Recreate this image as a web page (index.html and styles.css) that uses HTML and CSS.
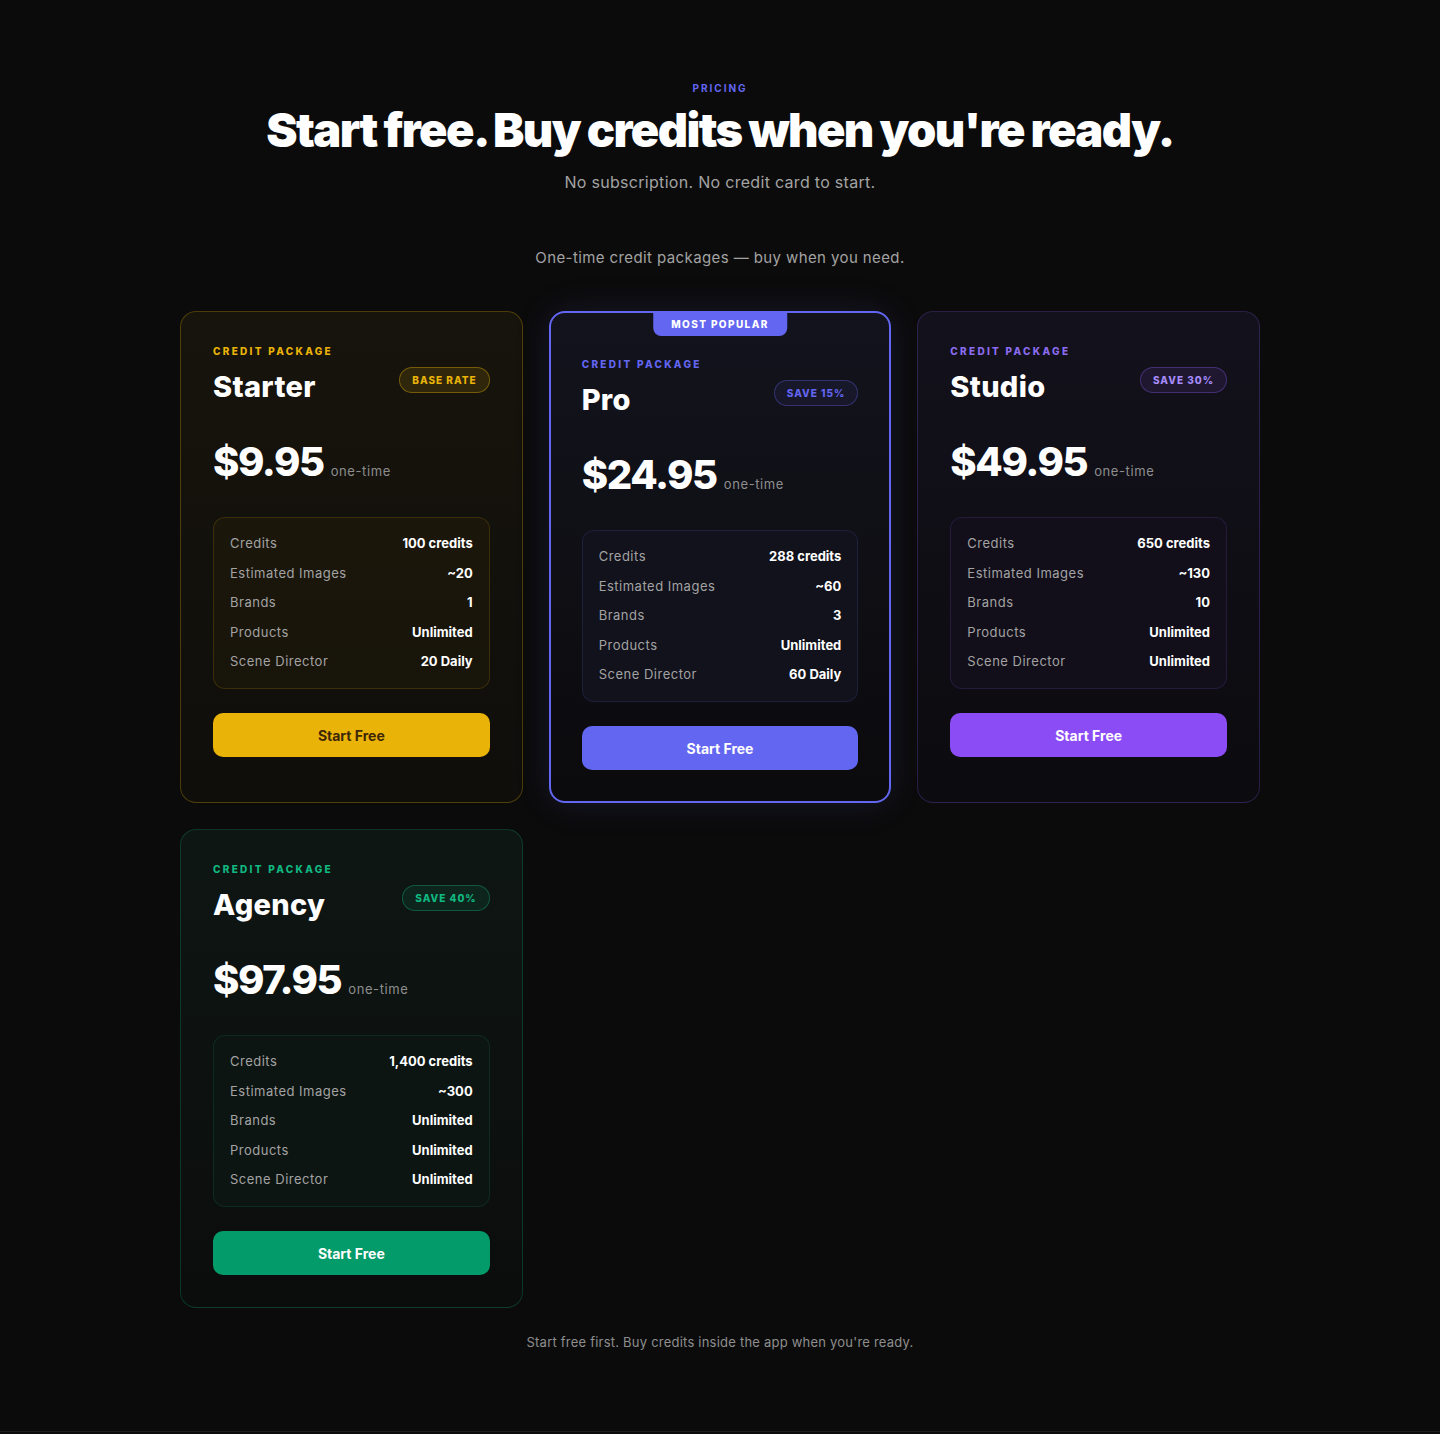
FILE: index.html
```html
<!DOCTYPE html>
<html lang="en">
<head>
<meta charset="utf-8">
<title>Pricing</title>
<link rel="stylesheet" href="styles.css">
</head>
<body>
<section class="pricing">
  <div class="eyebrow">PRICING</div>
  <h1 class="headline">Start free. Buy credits when you're ready.</h1>
  <p class="subtitle">No subscription. No credit card to start.</p>
  <p class="intro">One-time credit packages — buy when you need.</p>

  <div class="grid">
    <article class="card card-starter">
      <div class="label">CREDIT PACKAGE</div>
      <div class="name-row">
        <h2 class="name">Starter</h2>
        <span class="badge">BASE RATE</span>
      </div>
      <div class="price"><span class="amount">$9.95</span><span class="per">one-time</span></div>
      <div class="features">
        <div class="row"><span class="k">Credits</span><span class="v">100 credits</span></div>
        <div class="row"><span class="k">Estimated Images</span><span class="v">~20</span></div>
        <div class="row"><span class="k">Brands</span><span class="v">1</span></div>
        <div class="row"><span class="k">Products</span><span class="v">Unlimited</span></div>
        <div class="row"><span class="k">Scene Director</span><span class="v">20 Daily</span></div>
      </div>
      <button class="cta">Start Free</button>
    </article>

    <article class="card card-pro">
      <div class="popular">MOST POPULAR</div>
      <div class="label">CREDIT PACKAGE</div>
      <div class="name-row">
        <h2 class="name">Pro</h2>
        <span class="badge">SAVE 15%</span>
      </div>
      <div class="price"><span class="amount">$24.95</span><span class="per">one-time</span></div>
      <div class="features">
        <div class="row"><span class="k">Credits</span><span class="v">288 credits</span></div>
        <div class="row"><span class="k">Estimated Images</span><span class="v">~60</span></div>
        <div class="row"><span class="k">Brands</span><span class="v">3</span></div>
        <div class="row"><span class="k">Products</span><span class="v">Unlimited</span></div>
        <div class="row"><span class="k">Scene Director</span><span class="v">60 Daily</span></div>
      </div>
      <button class="cta">Start Free</button>
    </article>

    <article class="card card-studio">
      <div class="label">CREDIT PACKAGE</div>
      <div class="name-row">
        <h2 class="name">Studio</h2>
        <span class="badge">SAVE 30%</span>
      </div>
      <div class="price"><span class="amount">$49.95</span><span class="per">one-time</span></div>
      <div class="features">
        <div class="row"><span class="k">Credits</span><span class="v">650 credits</span></div>
        <div class="row"><span class="k">Estimated Images</span><span class="v">~130</span></div>
        <div class="row"><span class="k">Brands</span><span class="v">10</span></div>
        <div class="row"><span class="k">Products</span><span class="v">Unlimited</span></div>
        <div class="row"><span class="k">Scene Director</span><span class="v">Unlimited</span></div>
      </div>
      <button class="cta">Start Free</button>
    </article>

    <article class="card card-agency">
      <div class="label">CREDIT PACKAGE</div>
      <div class="name-row">
        <h2 class="name">Agency</h2>
        <span class="badge">SAVE 40%</span>
      </div>
      <div class="price"><span class="amount">$97.95</span><span class="per">one-time</span></div>
      <div class="features">
        <div class="row"><span class="k">Credits</span><span class="v">1,400 credits</span></div>
        <div class="row"><span class="k">Estimated Images</span><span class="v">~300</span></div>
        <div class="row"><span class="k">Brands</span><span class="v">Unlimited</span></div>
        <div class="row"><span class="k">Products</span><span class="v">Unlimited</span></div>
        <div class="row"><span class="k">Scene Director</span><span class="v">Unlimited</span></div>
      </div>
      <button class="cta">Start Free</button>
    </article>
  </div>

  <p class="note">Start free first. Buy credits inside the app when you're ready.</p>
</section>
<footer class="footer"></footer>
</body>
</html>
```

FILE: styles.css
```css
* {
  box-sizing: border-box;
}

html, body {
  margin: 0;
  padding: 0;
  background: #0b0b0b;
}

body {
  font-family: Inter, "Noto Sans", "Liberation Sans", sans-serif;
  color: #ffffff;
}

.pricing {
  display: flex;
  flex-direction: column;
  align-items: center;
  padding: 80px 0 79px;
}

.eyebrow {
  font-size: 10px;
  line-height: 16px;
  font-weight: 700;
  letter-spacing: 2px;
  color: #6366f1;
}

.headline {
  margin: 8px 0 0;
  font-size: 47px;
  line-height: 52px;
  font-weight: 900;
  letter-spacing: -1.6px;
  word-spacing: -1px;
  color: #ffffff;
}

.subtitle {
  margin: 14px 0 0;
  font-size: 16px;
  line-height: 24px;
  letter-spacing: 0.3px;
  color: #a3a3a3;
}

.intro {
  margin: 53px 0 0;
  font-size: 15px;
  line-height: 22px;
  letter-spacing: 0.4px;
  color: #a3a3a3;
}

.grid {
  margin-top: 42px;
  width: 1080px;
  display: grid;
  grid-template-columns: repeat(3, 1fr);
  gap: 26px;
  align-items: stretch;
}

.card {
  position: relative;
  border-radius: 16px;
  border: 1px solid #333;
  padding: 32px;
  display: flex;
  flex-direction: column;
}

.label {
  font-size: 10px;
  line-height: 15px;
  font-weight: 800;
  letter-spacing: 2.3px;
}

.name-row {
  margin-top: 8px;
  display: flex;
  justify-content: space-between;
  align-items: flex-start;
}

.name {
  margin: 0;
  font-size: 29px;
  line-height: 40px;
  font-weight: 800;
  letter-spacing: 0.3px;
  color: #ffffff;
}

.badge {
  height: 26px;
  padding: 0 12px;
  display: inline-flex;
  align-items: center;
  border-radius: 999px;
  font-size: 10px;
  font-weight: 800;
  letter-spacing: 1px;
}

.price {
  margin-top: 35px;
  display: flex;
  align-items: baseline;
}

.amount {
  font-size: 40px;
  line-height: 40px;
  font-weight: 800;
  letter-spacing: -1.4px;
  color: #ffffff;
}

.per {
  margin-left: 7px;
  font-size: 13px;
  letter-spacing: 0.6px;
  color: #8e8e8e;
}

.features {
  margin-top: 35px;
  border-radius: 12px;
  border: 1px solid #222;
  padding: 15px 16px 17px;
  display: flex;
  flex-direction: column;
  gap: 9.5px;
}

.row {
  display: flex;
  justify-content: space-between;
  font-size: 13px;
  line-height: 20px;
}

.k {
  color: #a3a3a3;
  letter-spacing: 0.5px;
}

.v {
  color: #ffffff;
  font-weight: 700;
}

.cta {
  margin-top: 24px;
  height: 44px;
  border: none;
  border-radius: 10px;
  font-family: inherit;
  font-size: 14px;
  font-weight: 700;
  cursor: pointer;
}

/* Starter */
.card-starter {
  border-color: rgba(234, 179, 8, 0.28);
  background: linear-gradient(180deg, #17140c 0%, #0f0e0b 100%);
}
.card-starter .label { color: #eab308; }
.card-starter .badge {
  color: #eab308;
  background: rgba(234, 179, 8, 0.12);
  border: 1px solid rgba(234, 179, 8, 0.38);
}
.card-starter .features {
  background: rgba(234, 179, 8, 0.035);
  border-color: rgba(234, 179, 8, 0.16);
}
.card-starter .cta {
  background: #eab308;
  color: #3d2707;
}

/* Pro */
.card-pro {
  border: 2px solid #6366f1;
  padding: 44px 31px 31px;
  background: linear-gradient(180deg, #13131d 0%, #0b0b0d 100%);
  box-shadow: 0 0 36px rgba(99, 102, 241, 0.14);
}
.popular {
  position: absolute;
  top: -1px;
  left: 50%;
  transform: translateX(-50%);
  height: 24px;
  padding: 0 18px;
  display: flex;
  align-items: center;
  background: #6366f1;
  border-radius: 0 0 8px 8px;
  font-size: 10px;
  font-weight: 800;
  letter-spacing: 1.4px;
  color: #ffffff;
}
.card-pro .label { color: #6366f1; }
.card-pro .badge {
  color: #6366f1;
  background: rgba(99, 102, 241, 0.08);
  border: 1px solid rgba(99, 102, 241, 0.35);
}
.card-pro .features {
  background: #11121b;
  border-color: rgba(99, 102, 241, 0.16);
}
.card-pro .cta {
  background: #6366f1;
  color: #ffffff;
}

/* Studio */
.card-studio {
  border-color: rgba(139, 92, 246, 0.24);
  background: linear-gradient(180deg, #13111b 0%, #0c0b0f 100%);
}
.card-studio .label { color: #8b6cf0; }
.card-studio .badge {
  color: #a78bfa;
  background: rgba(139, 92, 246, 0.1);
  border: 1px solid rgba(139, 92, 246, 0.35);
}
.card-studio .features {
  background: #120f1a;
  border-color: rgba(139, 92, 246, 0.16);
}
.card-studio .cta {
  background: #8b4cf6;
  color: #ffffff;
}

/* Agency */
.card-agency {
  border-color: rgba(16, 185, 129, 0.24);
  background: linear-gradient(180deg, #0e1613 0%, #0b0d0c 100%);
}
.card-agency .label { color: #10b981; }
.card-agency .badge {
  color: #10b981;
  background: rgba(16, 185, 129, 0.1);
  border: 1px solid rgba(16, 185, 129, 0.35);
}
.card-agency .features {
  background: #0d1512;
  border-color: rgba(16, 185, 129, 0.14);
}
.card-agency .cta {
  background: #049b6a;
  color: #ffffff;
}

.note {
  margin: 24px 0 0;
  font-size: 13px;
  line-height: 20px;
  letter-spacing: 0.22px;
  color: #8e8e8e;
}

.footer {
  border-top: 1px solid #1e1e1e;
  height: 40px;
}
```
